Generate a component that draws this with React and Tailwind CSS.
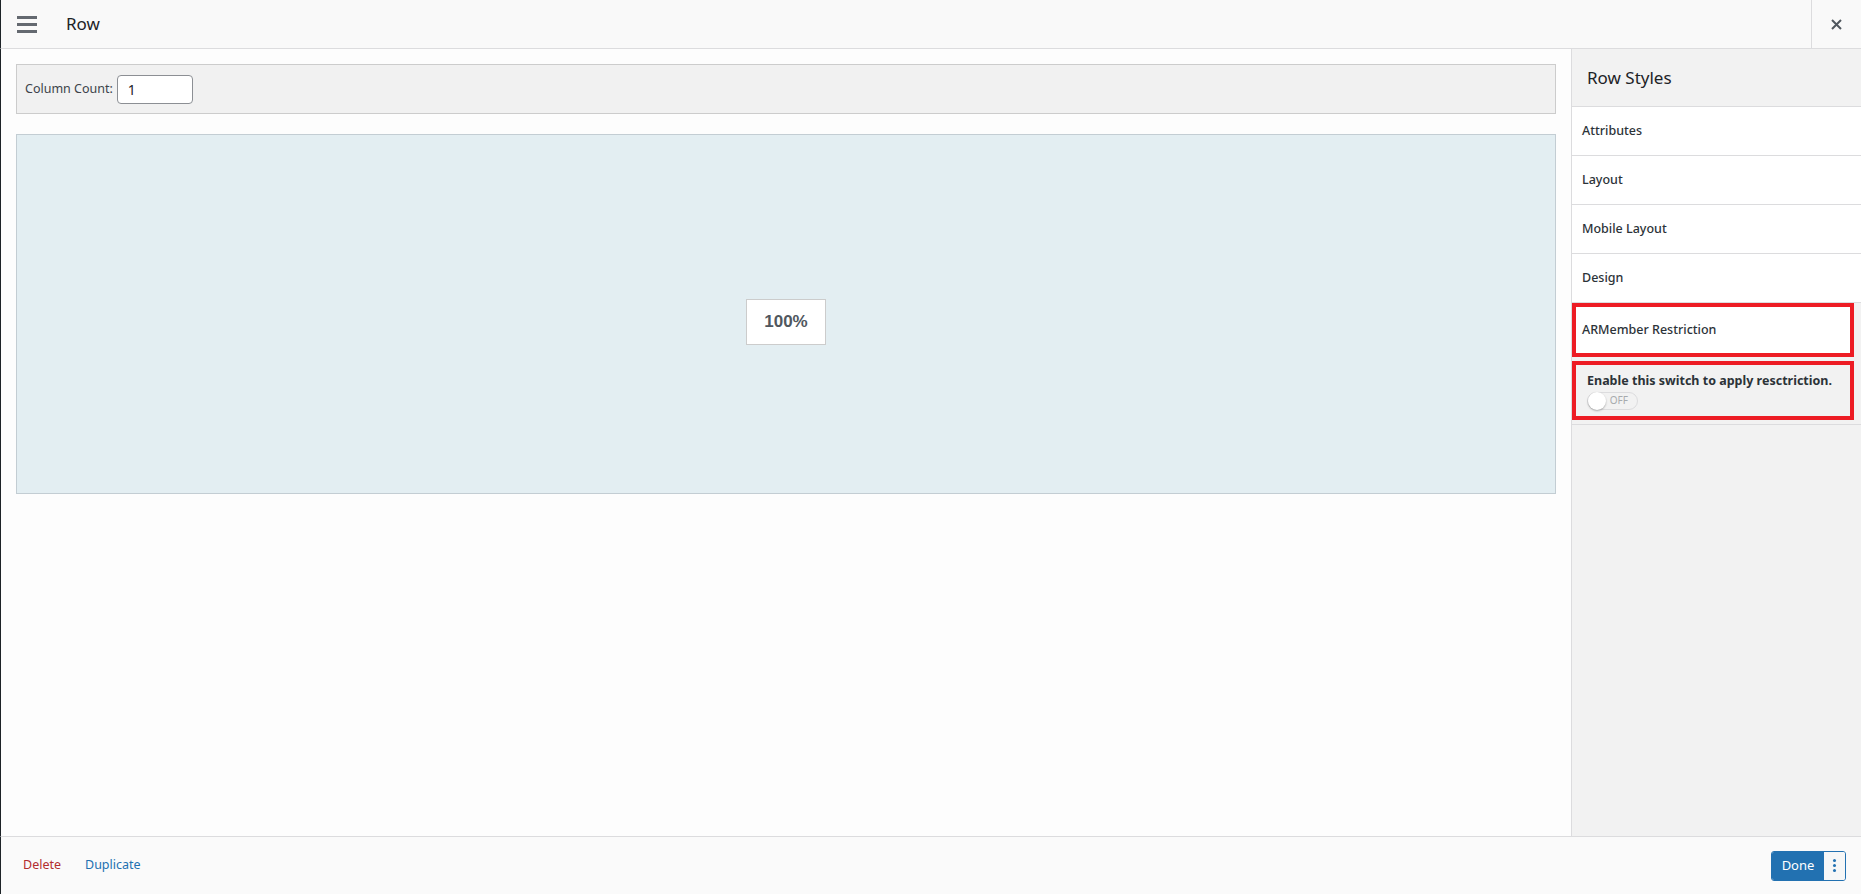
export default function App() {
  const items = ['Attributes', 'Layout', 'Mobile Layout', 'Design'];

  return (
    <div
      className="flex h-[894px] w-full flex-col bg-[#fdfdfd] text-[#1d2327]"
      style={{ fontFamily: '"Noto Sans", "Open Sans", sans-serif' }}
    >
      {/* header */}
      <div className="flex h-[49px] shrink-0 items-stretch border-b border-l border-b-[#dcdcde] border-l-[#1d2327] bg-[#f9f9f9]">
        <div className="flex w-[48px] items-center justify-center pl-[4px]">
          <div className="flex w-[20px] flex-col gap-[4px]">
            <span className="block h-[3px] bg-[#646970]" />
            <span className="block h-[3px] bg-[#646970]" />
            <span className="block h-[3px] bg-[#646970]" />
          </div>
        </div>
        <div className="flex flex-1 items-center pl-[17px] text-[17px]">Row</div>
        <div className="flex w-[50px] items-center justify-center border-l border-[#dcdcde] text-[#50575e]">
          <svg width="11" height="11" viewBox="0 0 11 11">
            <path d="M1 1L10 10M10 1L1 10" stroke="#50575e" strokeWidth="2" />
          </svg>
        </div>
      </div>

      {/* body */}
      <div className="flex min-h-0 flex-1 border-l border-[#1d2327]">
        <div className="flex flex-1 flex-col pl-[15px] pr-[15px] pt-[15px]">
          <div className="flex h-[50px] items-center gap-[4px] border border-[#cccccc] bg-[#f1f1f1] pl-[8px]">
            <span className="text-[12.5px] text-[#3c434a]">Column Count:</span>
            <div className="flex h-[29px] w-[76px] items-center rounded-[4px] border border-[#8c8f94] bg-white pl-[10px] text-[14px]">
              1
            </div>
          </div>
          <div className="mt-[20px] flex h-[360px] items-center justify-center border border-[#c3cdd3] bg-[#e3eef2] pt-[15px]">
            <div className="flex h-[46px] w-[80px] items-center justify-center border border-[#cccccc] bg-white text-[17px] font-bold text-[#50575e]" style={{ fontFamily: '"Liberation Sans", Arial, sans-serif' }}>
              100%
            </div>
          </div>
        </div>

        {/* right panel */}
        <div className="flex w-[290px] shrink-0 flex-col border-l border-[#dcdcde] bg-[#f2f2f2]">
          <div className="flex h-[58px] items-center border-b border-[#dcdcde] pl-[15px] text-[17px]">
            Row Styles
          </div>
          {items.map((item) => (
            <div
              key={item}
              className="flex h-[49px] items-center border-b border-[#dcdcde] bg-white pl-[10px] text-[12.5px] font-medium text-[#2c3338]"
            >
              {item}
            </div>
          ))}
          <div className="mr-[7px] flex h-[54px] items-center border-4 border-[#ed1c24] bg-white pl-[6px] text-[12.5px] font-medium text-[#2c3338]">
            ARMember Restriction
          </div>
          <div className="border-b border-[#dcdcde] pb-[4px] pt-[4px]">
            <div className="mr-[7px] flex h-[59px] flex-col justify-center border-4 border-[#ed1c24] pl-[11px]">
              <div className="text-[12.5px] font-bold leading-[17px] text-[#2c3338]">
                Enable this switch to apply resctriction.
              </div>
              <div className="relative mt-[3px] flex h-[18px] w-[51px] items-center justify-end rounded-full border border-[#dcdcde] bg-[#f2f2f2] pr-[9px] text-[10px] text-[#a7aaad]">
                OFF
                <span className="absolute left-0 top-[-1px] h-[18px] w-[18px] rounded-full bg-white shadow-[0_1px_2px_rgba(0,0,0,0.3)]" />
              </div>
            </div>
          </div>
        </div>
      </div>

      {/* footer */}
      <div className="flex h-[58px] shrink-0 items-center border-l border-t border-l-[#1d2327] border-t-[#dcdcde] bg-[#fafafa] pl-[22px] pr-[15px] text-[12.5px]">
        <span className="text-[#b32d2e]">Delete</span>
        <span className="ml-[24px] text-[#2271b1]">Duplicate</span>
        <div className="ml-auto flex h-[30px] overflow-hidden rounded-[3px] border border-[#2271b1]">
          <div className="flex w-[52px] items-center justify-center bg-[#2271b1] text-[13px] text-white">
            Done
          </div>
          <div className="flex w-[21px] flex-col items-center justify-center gap-[2px] bg-[#f6f7f7]">
            <span className="block h-[3px] w-[3px] rounded-full bg-[#2271b1]" />
            <span className="block h-[3px] w-[3px] rounded-full bg-[#2271b1]" />
            <span className="block h-[3px] w-[3px] rounded-full bg-[#2271b1]" />
          </div>
        </div>
      </div>
    </div>
  );
}
